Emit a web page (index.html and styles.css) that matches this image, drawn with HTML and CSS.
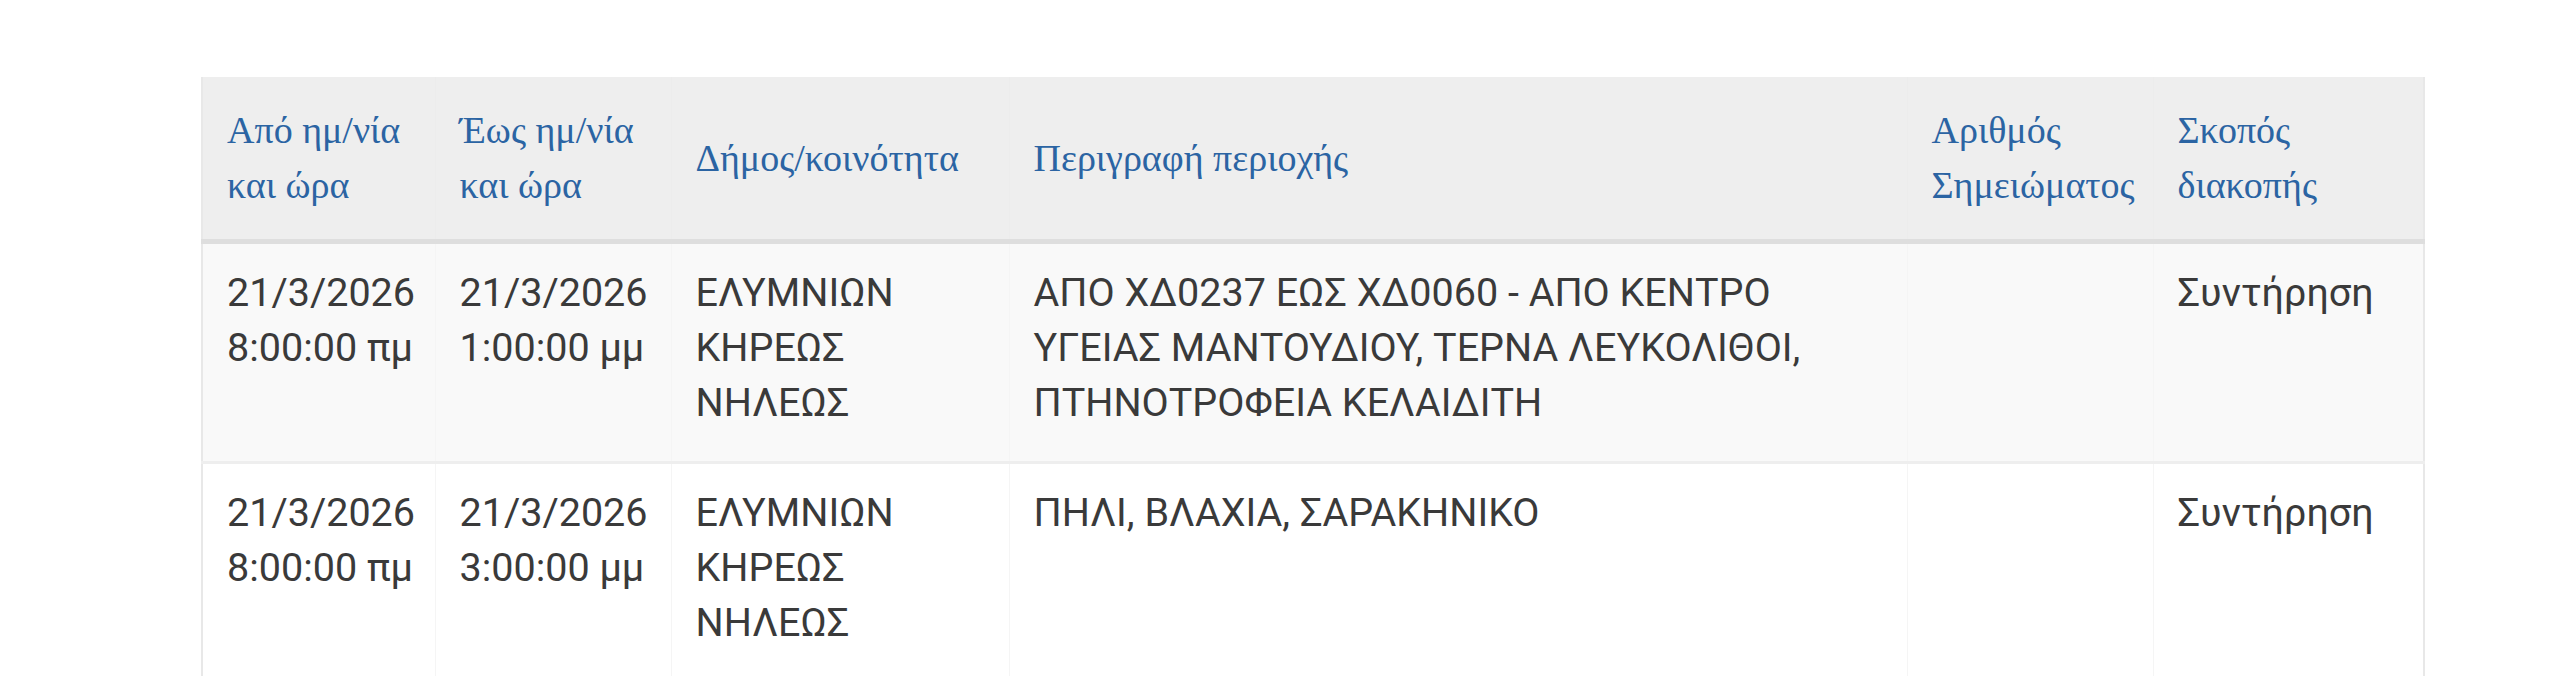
FILE: index.html
```html
<!DOCTYPE html>
<html lang="el">
<head>
<meta charset="utf-8">
<title>Διακοπές ρεύματος</title>
<link rel="stylesheet" href="styles.css">
</head>
<body>
<main class="page">
  <table class="outages">
    <thead>
      <tr>
        <th class="c-from">Από ημ/νία και ώρα</th>
        <th class="c-to">Έως ημ/νία και ώρα</th>
        <th class="c-muni">Δήμος/κοινότητα</th>
        <th class="c-desc">Περιγραφή περιοχής</th>
        <th class="c-num">Αριθμός Σημειώματος</th>
        <th class="c-purpose">Σκοπός διακοπής</th>
      </tr>
    </thead>
    <tbody>
      <tr class="odd">
        <td>21/3/2026 8:00:00 πμ</td>
        <td>21/3/2026 1:00:00 μμ</td>
        <td>ΕΛΥΜΝΙΩΝ ΚΗΡΕΩΣ ΝΗΛΕΩΣ</td>
        <td>ΑΠΟ ΧΔ0237 ΕΩΣ ΧΔ0060 - ΑΠΟ ΚΕΝΤΡΟ ΥΓΕΙΑΣ ΜΑΝΤΟΥΔΙΟΥ, ΤΕΡΝΑ ΛΕΥΚΟΛΙΘΟΙ, ΠΤΗΝΟΤΡΟΦΕΙΑ ΚΕΛΑΙΔΙΤΗ</td>
        <td></td>
        <td>Συντήρηση</td>
      </tr>
      <tr class="even">
        <td>21/3/2026 8:00:00 πμ</td>
        <td>21/3/2026 3:00:00 μμ</td>
        <td>ΕΛΥΜΝΙΩΝ ΚΗΡΕΩΣ ΝΗΛΕΩΣ</td>
        <td>ΠΗΛΙ, ΒΛΑΧΙΑ, ΣΑΡΑΚΗΝΙΚΟ</td>
        <td></td>
        <td>Συντήρηση</td>
      </tr>
    </tbody>
  </table>
</main>
</body>
</html>
```
FILE: styles.css
```css
html, body {
  margin: 0;
  padding: 0;
  background: #ffffff;
}

.page {
  padding: 77px 137px 0 201px;
}

.outages {
  width: 2222px;
  border-collapse: collapse;
  table-layout: fixed;
  border-left: 2px solid #e8e8e8;
  border-right: 2px solid #e8e8e8;
}

.outages th,
.outages td {
  box-sizing: border-box;
  padding: 26px 20px 26px 24px;
  line-height: 55px;
  text-align: left;
}

.outages th {
  background: #eeeeee;
  color: #2b64a3;
  font-family: "Liberation Serif", "Times New Roman", serif;
  font-size: 38px;
  font-weight: normal;
  vertical-align: middle;
  border-left: 1px solid #ececec;
  border-bottom: 5px solid #dedede;
}

.outages td {
  padding-top: 21px;
  padding-bottom: 31px;
  color: #3a3a3a;
  font-family: Roboto, "Noto Sans", sans-serif;
  font-size: 39.5px;
  vertical-align: top;
  border-left: 1px solid #f5f5f5;
  border-bottom: 3px solid #eeeeee;
}

.outages .odd td {
  background: #f9f9f9;
}

.outages .even td {
  background: #ffffff;
}

.c-from { width: 233px; }
.c-to { width: 236px; }
.c-muni { width: 338px; }
.c-desc { width: 898px; }
.c-num { width: 246px; }
.c-purpose { width: 271px; }
```
